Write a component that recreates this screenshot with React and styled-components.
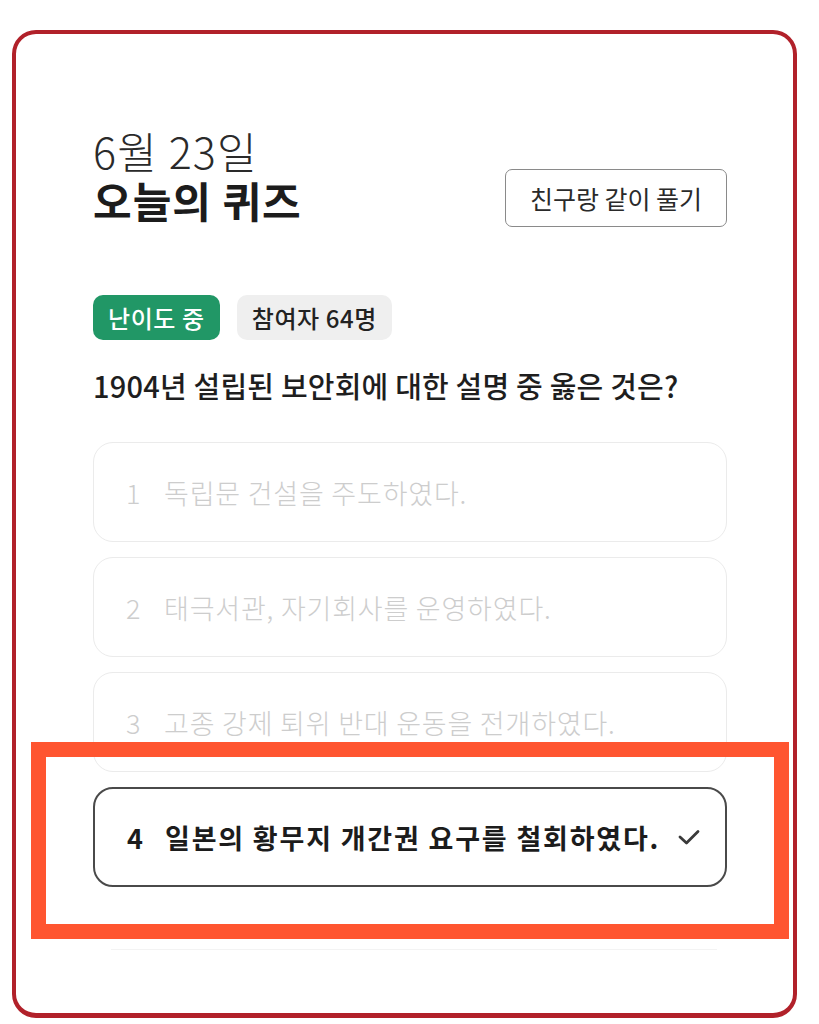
import React from "react";
import styled, { createGlobalStyle } from "styled-components";

const GlobalStyle = createGlobalStyle`
  * { box-sizing: border-box; }
  body {
    margin: 0;
    background: #ffffff;
    font-family: "Noto Sans CJK KR", "Noto Sans", sans-serif;
    color: #222;
  }
`;

const Frame = styled.div`
  position: relative;
  width: 785px;
  height: 988px;
  margin: 30px 0 0 12px;
  border: 4px solid #b1212a;
  border-bottom-width: 5px;
  border-radius: 24px;
  padding: 91px 66px 0 77px;
  display: flex;
  flex-direction: column;
`;

const Header = styled.div`
  display: flex;
  justify-content: space-between;
  align-items: flex-start;
`;

const TitleBlock = styled.div`
  display: flex;
  flex-direction: column;
`;

const DateLine = styled.div`
  font-size: 43px;
  line-height: 50px;
  font-weight: 300;
  color: #2a2a2a;
  letter-spacing: 1.2px;
`;

const Title = styled.div`
  font-size: 42px;
  line-height: 50px;
  font-weight: 700;
  color: #1c1c1c;
  letter-spacing: 1px;
`;

const FriendButton = styled.button`
  margin-top: 44px;
  width: 222px;
  height: 58px;
  border: 1.5px solid #8a8a8a;
  border-radius: 7px;
  background: #fff;
  font-family: inherit;
  font-size: 25px;
  font-weight: 400;
  color: #2a2a2a;
  cursor: pointer;
`;

const BadgeRow = styled.div`
  display: flex;
  gap: 17px;
  margin-top: 68px;
`;

const Badge = styled.span`
  display: inline-flex;
  align-items: center;
  height: 45px;
  padding: 0 15px;
  border-radius: 10px;
  font-size: 24px;
  font-weight: 500;
  letter-spacing: 0.6px;
  background: ${(p) => (p.$tone === "green" ? "#219766" : "#efefef")};
  color: ${(p) => (p.$tone === "green" ? "#ffffff" : "#222222")};
`;

const Question = styled.div`
  margin-top: 27px;
  font-size: 29px;
  line-height: 36px;
  font-weight: 500;
  color: #1e1e1e;
  letter-spacing: 0.2px;
`;

const OptionList = styled.div`
  display: flex;
  flex-direction: column;
  gap: 15px;
  margin-top: 39px;
`;

const OptionWrap = styled.div`
  position: relative;
`;

const Option = styled.div`
  display: flex;
  align-items: center;
  height: 100px;
  padding: 0 24px 0 32px;
  border-radius: 20px;
  border: ${(p) => (p.$selected ? "2px solid #4a4a4a" : "1.5px solid #ebebeb")};
  background: #fff;
  color: ${(p) => (p.$selected ? "#1c1c1c" : "#cdcdcd")};
  font-size: 27px;
  font-weight: ${(p) => (p.$selected ? 700 : 300)};
  letter-spacing: ${(p) => (p.$selected ? "1.8px" : "0.8px")};
`;

const OptionNum = styled.span`
  width: 38px;
  flex-shrink: 0;
`;

const OptionText = styled.span`
  flex: 1;
  white-space: nowrap;
`;

const Check = styled.svg`
  width: 24px;
  height: 18px;
  flex-shrink: 0;
`;

const Highlight = styled.div`
  position: absolute;
  top: -45px;
  left: -62px;
  right: -62px;
  bottom: -52px;
  border: 15px solid #ff5530;
  pointer-events: none;
`;

const Fade = styled.div`
  margin: 62px 10px 0 18px;
  height: 1px;
  background: #f3f3f3;
`;

const options = [
  "독립문 건설을 주도하였다.",
  "태극서관, 자기회사를 운영하였다.",
  "고종 강제 퇴위 반대 운동을 전개하였다.",
  "일본의 황무지 개간권 요구를 철회하였다.",
];

export default function App() {
  const selected = 3;
  return (
    <>
      <GlobalStyle />
      <Frame>
        <Header>
          <TitleBlock>
            <DateLine>6월 23일</DateLine>
            <Title>오늘의 퀴즈</Title>
          </TitleBlock>
          <FriendButton>친구랑 같이 풀기</FriendButton>
        </Header>
        <BadgeRow>
          <Badge $tone="green">난이도 중</Badge>
          <Badge>참여자 64명</Badge>
        </BadgeRow>
        <Question>1904년 설립된 보안회에 대한 설명 중 옳은 것은?</Question>
        <OptionList>
          {options.map((text, i) => (
            <OptionWrap key={i}>
              <Option $selected={i === selected}>
                <OptionNum>{i + 1}</OptionNum>
                <OptionText>{text}</OptionText>
                {i === selected && (
                  <Check viewBox="0 0 24 18">
                    <polyline
                      points="3,9 9.5,15 21,3.5"
                      fill="none"
                      stroke="#3a3a3a"
                      strokeWidth="2.8"
                      strokeLinecap="round"
                      strokeLinejoin="round"
                    />
                  </Check>
                )}
              </Option>
              {i === selected && <Highlight />}
            </OptionWrap>
          ))}
        </OptionList>
        <Fade />
      </Frame>
    </>
  );
}
